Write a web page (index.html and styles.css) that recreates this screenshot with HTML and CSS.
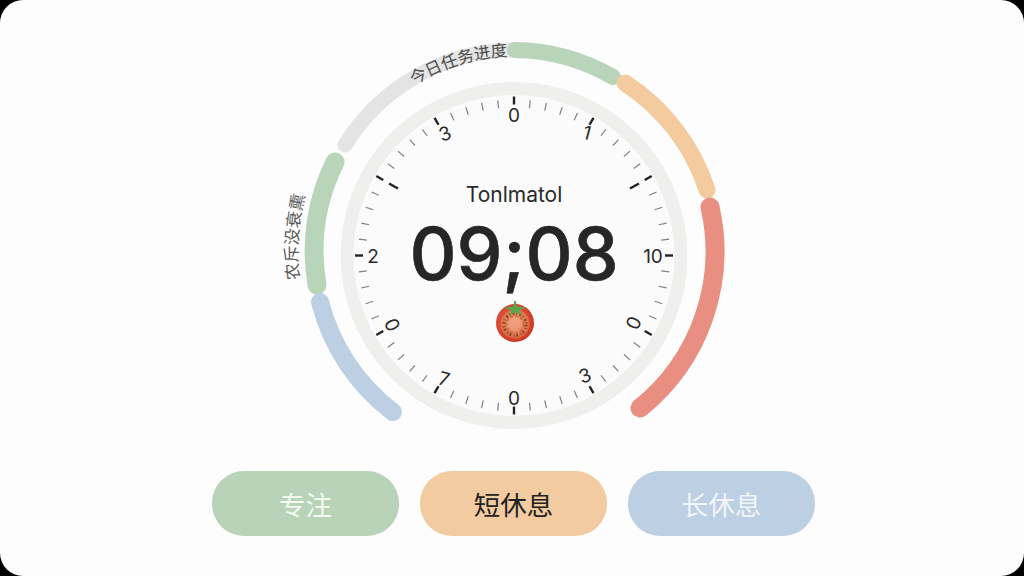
FILE: index.html
```html
<!DOCTYPE html>
<html lang="zh-CN">
<head>
    <meta charset="UTF-8">
    <title>Tomato Timer</title>
    <link rel="stylesheet" href="styles.css">
</head>
<body>
    <div class="screen">
        <svg class="dial" width="520" height="430" viewBox="-262 -225 520 430">
            <defs>
                <line id="minor" class="tick-minor" x1="0" y1="-148" x2="0" y2="-156"/>
                <line id="major" class="tick-major" x1="0" y1="-151" x2="0" y2="-159"/>
                <g id="minors">
                    <use href="#minor" transform="rotate(6)"/>
                    <use href="#minor" transform="rotate(12)"/>
                    <use href="#minor" transform="rotate(18)"/>
                    <use href="#minor" transform="rotate(24)"/>
                </g>
                <radialGradient id="tomatoSkin" cx="45%" cy="45%" r="60%">
                    <stop offset="0.65" stop-color="#dc4b35"/>
                    <stop offset="1" stop-color="#c4321f"/>
                </radialGradient>
                <radialGradient id="tomatoFlesh" cx="50%" cy="45%" r="55%">
                    <stop offset="0.3" stop-color="#ef9d7c"/>
                    <stop offset="1" stop-color="#d9653f"/>
                </radialGradient>
                <path id="labelTop" d="M-142 -135 A197 197 0 0 1 48 -194"/>
                <path id="labelLeft" d="M-208 56 A216 216 0 0 1 -198 -90"/>
            </defs>

            <!-- segments -->
            <path class="arc arc-gray" d="M-169 -110 A201 201 0 0 1 1 -205"/>
            <path class="arc arc-green" d="M1 -205 A201 201 0 0 1 99 -178"/>
            <path class="arc arc-orange" d="M111 -172 A201 201 0 0 1 193 -65"/>
            <path class="arc arc-red" d="M196 -48 A201 201 0 0 1 126 153"/>
            <path class="arc arc-green arc-wide" d="M-179 -93 A201 201 0 0 0 -197 30"/>
            <path class="arc arc-blue" d="M-194 47 A201 201 0 0 0 -121 157"/>

            <text class="arc-label arc-label-top"><textPath href="#labelTop" startOffset="50%">今日任务进度</textPath></text>
            <text class="arc-label arc-label-left"><textPath href="#labelLeft" startOffset="50%">农斥没衰熏</textPath></text>

            <circle class="face" cx="0" cy="0.5" r="167"/>

            <g transform="translate(0 0.5)">
                <use href="#minors"/>
                <use href="#minors" transform="rotate(30)"/>
                <use href="#minors" transform="rotate(60)"/>
                <use href="#minors" transform="rotate(90)"/>
                <use href="#minors" transform="rotate(120)"/>
                <use href="#minors" transform="rotate(150)"/>
                <use href="#minors" transform="rotate(180)"/>
                <use href="#minors" transform="rotate(210)"/>
                <use href="#minors" transform="rotate(240)"/>
                <use href="#minors" transform="rotate(270)"/>
                <use href="#minors" transform="rotate(300)"/>
                <use href="#minors" transform="rotate(330)"/>

                <use href="#major"/>
                <use href="#major" transform="rotate(30)"/>
                <use href="#major" transform="rotate(60)"/>
                <use href="#major" transform="rotate(90)"/>
                <use href="#major" transform="rotate(120)"/>
                <use href="#major" transform="rotate(150)"/>
                <use href="#major" transform="rotate(180)"/>
                <use href="#major" transform="rotate(210)"/>
                <use href="#major" transform="rotate(240)"/>
                <use href="#major" transform="rotate(270)"/>
                <use href="#major" transform="rotate(300)"/>
                <use href="#major" transform="rotate(330)"/>
                <line class="tick-major" x1="116" y1="-67" x2="125" y2="-72"/>
                <line class="tick-major" x1="-116" y1="-67" x2="-125" y2="-72"/>
            </g>

            <text class="num" x="0" y="-140">0</text>
            <text class="num" transform="translate(73 -122) rotate(15)">1</text>
            <text class="num" transform="translate(-69 -121) rotate(-20)">3</text>
            <text class="num" x="139" y="1">10</text>
            <text class="num" x="-141" y="1">2</text>
            <text class="num" transform="translate(120 68) rotate(-65)">0</text>
            <text class="num" transform="translate(71 121) rotate(-20)">3</text>
            <text class="num" x="0" y="143">0</text>
            <text class="num" transform="translate(-70 124) rotate(15)">7</text>
            <text class="num" transform="translate(-122 70) rotate(65)">0</text>

            <text class="title" x="0" y="-53">Tonlmatol</text>
            <text class="time" x="0" y="25">09;08</text>

            <g transform="translate(1 68)">
                <circle r="19" fill="url(#tomatoSkin)"/>
                <circle r="14.5" cy="1" fill="url(#tomatoFlesh)"/>
                <circle class="tomato-seeds" r="11" cy="1.5"/>
                <circle class="tomato-seeds-fine" r="8.5" cy="1.5"/>
                <path class="tomato-leaf" d="M-0.8 -22 L1 -22 L1.6 -16.5 L11 -15.5 L4 -12.5 L7 -7.5 L0 -11 L-5 -7 L-3.5 -12.5 L-11 -15 L-1.5 -16.5 Z"/>
            </g>
        </svg>

        <div class="modes">
            <button class="mode mode-focus">专注</button>
            <button class="mode mode-short">短休息</button>
            <button class="mode mode-long">长休息</button>
        </div>
    </div>
</body>
</html>
```

FILE: styles.css
```css
html, body {
    margin: 0;
    height: 100%;
    background-color: #000;
}
.screen {
    width: 1024px;
    height: 576px;
    box-sizing: border-box;
    padding-top: 30px;
    display: flex;
    flex-direction: column;
    align-items: center;
    background-color: #fdfdfd;
    border-radius: 23px;
    overflow: hidden;
}
.dial {
    display: block;
    flex: none;
}
.arc {
    fill: none;
    stroke-width: 16;
    stroke-linecap: round;
}
.arc-wide {
    stroke-width: 19;
}
.arc-gray {
    stroke: #e3e4e3;
    stroke-width: 15;
}
.arc-green {
    stroke: #b8d4b9;
}
.arc-orange {
    stroke: #f3cb9f;
    stroke-width: 17;
}
.arc-red {
    stroke: #e98f81;
    stroke-width: 19;
}
.arc-blue {
    stroke: #bccfe3;
    stroke-width: 18;
}
.arc-label {
    font-family: "Noto Sans CJK SC", sans-serif;
    fill: #4a4a4a;
    text-anchor: middle;
}
.arc-label-top {
    font-size: 16.5px;
}
.arc-label-left {
    font-size: 17px;
    fill: #5a5a5a;
}
.face {
    fill: #fbfbfb;
    stroke: #efefee;
    stroke-width: 13;
}
.tick-minor {
    stroke: #808080;
    stroke-width: 1.2;
}
.tick-major {
    stroke: #222;
    stroke-width: 2.4;
}
.num {
    font-family: Inter, sans-serif;
    font-size: 19px;
    fill: #2a2a2a;
    text-anchor: middle;
    dominant-baseline: central;
}
.title {
    font-family: Inter, sans-serif;
    font-size: 21px;
    fill: #2a2a2a;
    text-anchor: middle;
}
.time {
    font-family: Inter, sans-serif;
    font-size: 73px;
    font-weight: 500;
    fill: #262626;
    stroke: #262626;
    stroke-width: 0.6;
    text-anchor: middle;
}
.tomato-seeds {
    fill: none;
    stroke: #8f4a22;
    stroke-width: 3;
    stroke-dasharray: 2 1.5 1 2.5;
}
.tomato-seeds-fine {
    fill: none;
    stroke: #c9643c;
    stroke-width: 1.5;
    stroke-dasharray: 3 2;
}
.tomato-leaf {
    fill: #56a84a;
}
.modes {
    display: flex;
    gap: 21px;
    margin-top: 11px;
    margin-left: 3px;
}
.mode {
    width: 187px;
    height: 65px;
    border: none;
    border-radius: 32px;
    font-family: "Noto Sans CJK SC", sans-serif;
    font-size: 26.5px;
    cursor: pointer;
}
.mode-focus {
    background-color: #b8d3b8;
    color: #f5f9f3;
}
.mode-short {
    background-color: #f3cba1;
    color: #222;
}
.mode-long {
    background-color: #bdcfe3;
    color: #f2f6fa;
}
```
